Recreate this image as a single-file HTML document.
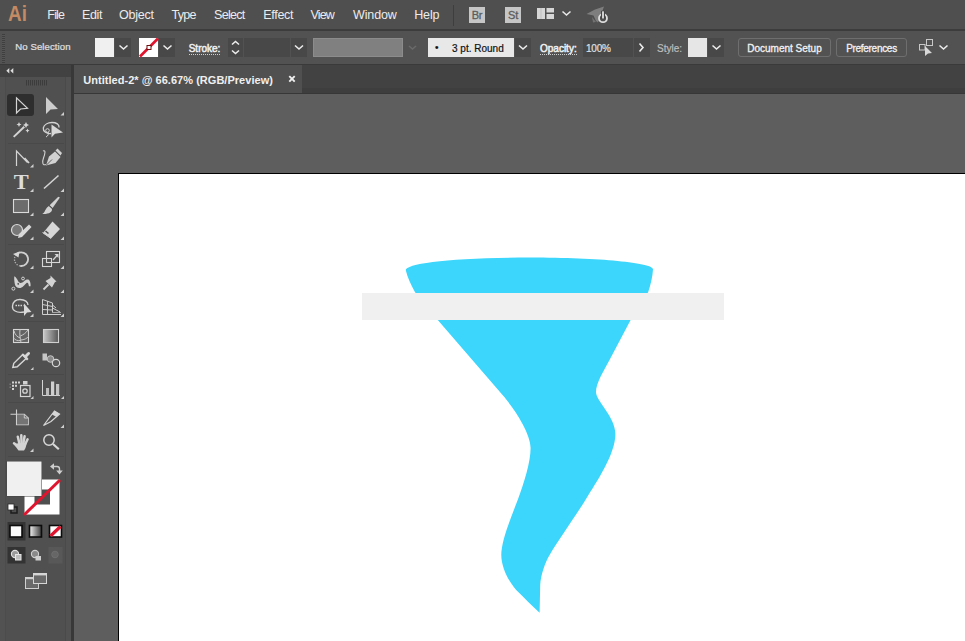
<!DOCTYPE html>
<html>
<head>
<meta charset="utf-8">
<title>Untitled-2* @ 66.67% (RGB/Preview)</title>
<style>
html,body{margin:0;padding:0;}
body{width:965px;height:641px;overflow:hidden;background:#5d5d5d;position:relative;font-family:"Liberation Sans","DejaVu Sans",sans-serif;color:#e6e6e6;}
.abs{position:absolute;}
#menubar{left:0;top:0;width:965px;height:29px;background:#4f4f4f;}
#menuline{left:0;top:29px;width:965px;height:2px;background:#3c3c3c;}
#ctrlbar{left:0;top:31px;width:965px;height:33px;background:#525252;}
.menu{position:absolute;top:7px;font-size:12.5px;color:#ececec;line-height:16px;white-space:nowrap;}
#ailogo{left:7.7px;top:0.6px;font-size:21.5px;line-height:26px;color:#c48a63;font-weight:bold;transform:scaleX(0.88);transform-origin:0 0;}
.lbl{-webkit-text-stroke:0.2px;margin-top:1px;position:absolute;font-size:10px;line-height:12px;color:#e0e0e0;white-space:nowrap;}
.ul{border-bottom:1px dotted #cfcfcf;}
#tabbar{left:72px;top:64px;width:893px;height:30px;background:#424242;}
#tab{left:74px;top:65px;width:228px;height:28px;background:#505050;}
#tabtxt{left:83.3px;top:74px;letter-spacing:0.03px;font-size:11px;line-height:13px;font-weight:bold;color:#efefef;white-space:nowrap;}
#toolbar{left:5px;top:77px;width:61px;height:564px;background:#505050;border-left:1px solid #4c4c4c;border-right:1px solid #4a4a4a;box-sizing:border-box;}
#toolhead{left:0;top:64px;width:72px;height:13px;background:#424242;}
#canvas{left:74px;top:94px;width:891px;height:547px;background:#5e5e5e;}
#artboard{left:118px;top:173px;width:860px;height:480px;background:#fff;border:1px solid #000;}
.btn{-webkit-text-stroke:0.3px #f4f4f4;position:absolute;top:38px;height:19px;border:1px solid #6e6e6e;border-radius:3px;font-size:10px;line-height:19.5px;color:#f0f0f0;text-align:center;box-sizing:border-box;white-space:nowrap;}

.appbox{width:16px;height:16px;background:#c6c6c6;color:#5c5c5c;font-size:11px;line-height:16px;text-align:center;font-weight:normal;letter-spacing:-0.2px;-webkit-text-stroke:0.3px;}
.sw{width:19px;height:19px;}
.dd{width:16px;height:19px;background:#484848;}
.fld{height:19px;background:#484848;}
.b{-webkit-text-stroke:0.5px #f0f0f0;color:#f0f0f0;}
#tbouter{left:0;top:64px;width:72px;height:577px;background:#525252;}
</style>
</head>
<body>
<div id="menubar" class="abs"></div>
<div id="menuline" class="abs"></div>
<div id="ctrlbar" class="abs"></div>
<div id="ailogo" class="abs">Ai</div>
<div class="menu" style="left:47.3px;letter-spacing:-0.8px">File</div>
<div class="menu" style="left:82px;letter-spacing:-0.35px">Edit</div>
<div class="menu" style="left:119px;letter-spacing:-0.23px">Object</div>
<div class="menu" style="left:171.6px;letter-spacing:-0.73px">Type</div>
<div class="menu" style="left:214px;letter-spacing:-0.69px">Select</div>
<div class="menu" style="left:263.3px;letter-spacing:-0.3px">Effect</div>
<div class="menu" style="left:310.5px;letter-spacing:-0.85px">View</div>
<div class="menu" style="left:353px;letter-spacing:-0.13px">Window</div>
<div class="menu" style="left:414.3px;letter-spacing:-0.2px">Help</div>

<!-- menubar right icons -->
<div class="abs" style="left:453px;top:5px;width:1px;height:21px;background:#3e3e3e"></div>
<div class="abs appbox" style="left:469px;top:7px;">Br</div>
<div class="abs appbox" style="left:505px;top:7px;">St</div>
<svg class="abs" style="left:536px;top:6px" width="80" height="20" viewBox="536 6 80 20">
  <rect x="537" y="8" width="8" height="11" fill="#d6d6d6"/>
  <rect x="540.700" y="8" width="0.600" height="11" fill="#b0b0b0"/>
  <rect x="546.5" y="8" width="7.5" height="4.5" fill="#d6d6d6"/>
  <rect x="546.5" y="14" width="7.5" height="5" fill="#d6d6d6"/>
  <path d="M562.5,11.5 L566.5,15 L570.5,11.5" fill="none" stroke="#e8e8e8" stroke-width="1.6"/>
  <path d="M586.500,14 L595,9.500 L604,6.500 L602,12 L598,22.500 L596,21 L593.500,15.500 Z" fill="#7e7e7e"/>
  <path d="M592,17 L596,22 L593,22.500 Z" fill="#727272"/>
  <circle cx="603" cy="18.200" r="4" fill="#4f4f4f" stroke="#e0e0e0" stroke-width="1.800"/>
  <rect x="601" y="10.800" width="4" height="8" fill="#454545"/>
  <rect x="602.100" y="11.300" width="1.800" height="7.200" fill="#e0e0e0"/>
</svg>

<!-- control bar -->
<div class="abs" style="left:2px;top:34px;width:3px;height:29px;background:repeating-linear-gradient(to bottom,#3f3f3f 0,#3f3f3f 1px,#565656 1px,#565656 2px)"></div>
<div class="lbl" style="left:15.3px;top:40px;font-size:9.6px;letter-spacing:0.07px">No Selection</div>
<div class="abs sw" style="left:95px;top:38px;background:#f0f0f0"></div>
<div class="abs dd" style="left:115px;top:38px"></div>
<div class="abs sw" style="left:139px;top:38px;background:#fff"></div>
<div class="abs dd" style="left:159px;top:38px"></div>
<div class="lbl b" style="left:188.7px;top:42px;"><span class="ul">Stroke:</span></div>
<div class="abs dd" style="left:228px;top:38px;width:15px"></div>
<div class="abs fld" style="left:244px;top:38px;width:46px"></div>
<div class="abs dd" style="left:291px;top:38px"></div>
<div class="abs" style="left:313px;top:38px;width:90px;height:19px;background:#808080;border:1px solid #8c8c8c;box-sizing:border-box"></div>
<div class="abs" style="left:428px;top:38px;width:86px;height:19px;background:#e8e8e8"></div>
<div class="lbl" style="left:435px;top:41px;color:#111">•</div>
<div class="lbl" style="left:452px;top:42px;color:#111">3 pt. Round</div>
<div class="abs dd" style="left:515px;top:38px"></div>
<div class="lbl b" style="left:540px;top:42px;"><span class="ul">Opacity:</span></div>
<div class="abs fld" style="left:583px;top:38px;width:50px"></div>
<div class="lbl" style="left:586px;top:42px;letter-spacing:-0.19px">100%</div>
<div class="abs dd" style="left:634px;top:38px"></div>
<div class="lbl" style="left:657px;top:42px;color:#bdbdbd">Style:</div>
<div class="abs sw" style="left:688px;top:38px;background:#e6e6e6"></div>
<div class="abs dd" style="left:708px;top:38px"></div>
<div class="btn" style="left:738px;width:93px">Document Setup</div>
<div class="btn" style="left:836px;width:71px;letter-spacing:-0.29px">Preferences</div>
<svg class="abs" style="left:0;top:32px" width="965" height="32" viewBox="0 32 965 32">
  <g fill="none" stroke="#ececec" stroke-width="1.6">
    <path d="M119.5,45.5 L123.5,49 L127.5,45.5"/>
    <path d="M163.500,45.5 L167.500,49 L171.500,45.5"/>
    <path d="M232,44.500 L235.500,41.500 L239,44.500"/>
    <path d="M232,50.500 L235.500,53.500 L239,50.500"/>
    <path d="M295,45.5 L299,49 L303,45.5"/>
    <path d="M519,45.5 L523,49 L527,45.5"/>
    <path d="M639.500,43.500 L643,47.500 L639.500,51.500"/>
    <path d="M712.500,45.5 L716.500,49 L720.500,45.5"/>
    <path d="M939.500,45.500 L943.500,49 L947.500,45.500"/>
  </g>
  <path d="M409,46 L412.500,49 L416,46" fill="none" stroke="#6a6a6a" stroke-width="1.5"/>
  <!-- stroke none swatch -->
  <path d="M140,56.500 L158,38.500" stroke="#e2142d" stroke-width="2.6"/>
  <rect x="147" y="45.500" width="4" height="4" fill="#fff" stroke="#6b1010" stroke-width="1"/>
  <!-- selection icon right -->
  <g fill="none" stroke="#c8c8c8" stroke-width="1">
    <rect x="919.500" y="44.500" width="5.500" height="5.500"/>
    <rect x="926.500" y="39.500" width="6" height="6"/>
  </g>
  <path d="M925,46 L925,56 L928,53.500 L932,53 Z" fill="#d8d8d8"/>
</svg>

<div id="tabbar" class="abs"></div>
<div class="abs" style="left:74px;top:88px;width:891px;height:6px;background:#3e3e3e"></div>
<div id="tab" class="abs"></div>
<div class="abs" style="left:74px;top:93px;width:891px;height:1px;background:#373737"></div>
<div id="tabtxt" class="abs">Untitled-2* @ 66.67% (RGB/Preview)</div>
<svg class="abs" style="left:286px;top:73px" width="12" height="12" viewBox="286 73 12 12"><path d="M289.300,76.200 L294.700,81.600 M294.700,76.200 L289.300,81.600" stroke="#f0f0f0" stroke-width="1.900"/></svg>
<div id="canvas" class="abs"></div>
<div id="artboard" class="abs"></div>
<div id="tbouter" class="abs"></div>
<div id="toolbar" class="abs"></div>
<div id="toolhead" class="abs"></div>
<div class="abs" style="left:71px;top:64px;width:3px;height:577px;background:#383838"></div>

<div class="abs" style="left:0;top:64px;width:965px;height:1px;background:#3a3a3a"></div>

<!--TOOLBAR-->
<svg class="abs" style="left:0;top:64px" width="74" height="577" viewBox="0 64 74 577">
<!-- header -->
<path d="M9.300,68 L6.300,70.700 L9.300,73.400 Z M13.300,68 L10.300,70.700 L13.300,73.400 Z" fill="#dcdcdc"/>
<g stroke="#3c3c3c" stroke-width="1">
<path d="M26.500,80 v5.500 M28.500,80 v5.500 M30.500,80 v5.500 M32.500,80 v5.500 M34.500,80 v5.500 M36.500,80 v5.500 M38.500,80 v5.500 M40.500,80 v5.500 M42.500,80 v5.500 M44.500,80 v5.500 M46.500,80 v5.500"/>
</g>
<!-- selected tool bg -->
<rect x="7" y="94" width="27" height="22" rx="3" fill="#2e2e2e"/>
<!-- small corner triangles -->
<g fill="#cfcfcf">
<path d="M64,112 v3.500 h-3.500 Z"/>
<path d="M33.500,164 v3.500 h-3.500 Z"/>
<path d="M33.500,188.500 v3.500 h-3.500 Z"/><path d="M64,188.500 v3.500 h-3.500 Z"/>
<path d="M33.500,212.500 v3.500 h-3.500 Z"/><path d="M64,212.500 v3.500 h-3.500 Z"/>
<path d="M33.500,236.500 v3.500 h-3.500 Z"/><path d="M64,236.500 v3.500 h-3.500 Z"/>
<path d="M33.500,265.500 v3.500 h-3.500 Z"/><path d="M64,265.500 v3.500 h-3.500 Z"/>
<path d="M33.500,289.500 v3.500 h-3.500 Z"/><path d="M64,289.500 v3.500 h-3.500 Z"/>
<path d="M33.500,313.500 v3.500 h-3.500 Z"/><path d="M64,313.500 v3.500 h-3.500 Z"/>
<path d="M33.500,367 v3 h-3 Z"/>
<path d="M33.500,396 v3 h-3 Z"/><path d="M64,396 v3 h-3 Z"/>
<path d="M64,424.500 v3.500 h-3.500 Z"/>
<path d="M33.500,448.500 v3.500 h-3.500 Z"/>
</g>
<!-- group separators -->
<g stroke="#494949" stroke-width="1">
<path d="M8,143.500 H64 M8,244.500 H64 M8,321.500 H64 M8,374.500 H64 M8,402.500 H64 M8,456.500 H64"/>
</g>

<!-- row1: selection (outline) & direct selection (filled) -->
<path d="M16.500,97.800 L16.500,113 L20.500,109 L27.500,108.300 Z" fill="none" stroke="#d4d4d4" stroke-width="1.200" stroke-linejoin="miter"/>
<path d="M46,97 L46,114 L50.500,109.500 L58,109 Z" fill="#cdcdcd"/>

<!-- row2: magic wand, lasso -->
<path d="M13.700,136.900 L24.300,126.700" stroke="#d4d4d4" stroke-width="2"/>
<path d="M19,122 l0.800,1.700 l1.700,0.800 l-1.700,0.800 l-0.800,1.700 l-0.800,-1.700 l-1.700,-0.800 l1.700,-0.800 Z M26,122 l1,2 l2,1 l-2,1 l-1,2 l-1,-2 l-2,-1 l2,-1 Z M27.500,128.500 l0.700,1.400 l1.400,0.700 l-1.400,0.700 l-0.700,1.400 l-0.700,-1.400 l-1.400,-0.700 l1.400,-0.700 Z" fill="#d4d4d4"/>
<path d="M51,133.500 C46,134 43,131 43.300,128 C44,124.500 48,122.500 52,122.500 C56.500,122.500 59.500,124.500 59,127.500" fill="none" stroke="#d4d4d4" stroke-width="1.3"/>
<circle cx="47.500" cy="130.500" r="1.800" fill="none" stroke="#d4d4d4" stroke-width="1"/>
<path d="M48,132 C49,134 48,136 46,137" fill="none" stroke="#d4d4d4" stroke-width="1"/>
<path d="M51.500,124.500 L51.500,137.500 L55,133.800 L63,132.500 Z" fill="#d8d8d8"/>

<!-- row3: anchor point, curvature pen -->
<path d="M16.500,166 L16.500,151 L27.500,162.500" fill="none" stroke="#d4d4d4" stroke-width="1.2"/>
<path d="M24.500,158 L29,163" stroke="#d4d4d4" stroke-width="1.8"/>
<path d="M43,151 C46,149.500 45,154 43.500,158 C42,162 42.500,166 46,164.500" fill="none" stroke="#d4d4d4" stroke-width="1.1"/>
<path d="M46,165.500 L49,156.500 L55,151.500 L60.500,157 L55.500,163 Z" fill="#d2d2d2"/>
<path d="M55.500,150.500 L57.500,148.500 L62,153 L60.500,155.500 Z" fill="#d2d2d2"/>
<path d="M46.500,165 L52,159.500" stroke="#515151" stroke-width="0.9"/>

<!-- row4: type, line -->
<text x="21.300" y="189" font-family="Liberation Serif, DejaVu Serif, serif" font-weight="bold" font-size="20" text-anchor="middle" fill="#dcdcdc" textLength="15" lengthAdjust="spacingAndGlyphs">T</text>
<path d="M44,188.500 L58.500,175.500" stroke="#d4d4d4" stroke-width="1.6"/>

<!-- row5: rectangle, paintbrush -->
<rect x="13.500" y="199.500" width="15" height="13" fill="#6c6c6c" stroke="#dadada" stroke-width="1.100"/>
<path d="M59.900,197.400 L58.300,196.700 L49.600,205.200 L52.600,208 Z" fill="#d2d2d2"/>
<path d="M48.900,206 L51.900,208.800 C52.600,212.300 49,214.300 42.300,214 C45.300,212.600 45,208.300 48.900,206 Z" fill="#d2d2d2"/>
<path d="M49.200,205.600 L52.300,208.500" stroke="#505050" stroke-width="0.700"/>

<!-- row6: shaper, eraser -->
<circle cx="17" cy="230" r="5.500" fill="#787878" stroke="#d8d8d8" stroke-width="1.200"/>
<path d="M18,238 L19,234 L29,224.500 L31.500,227 L22,237 Z" fill="#d8d8d8"/>
<path d="M52.500,221.500 L60,229 L51,238.500 L43,233 Z" fill="#d6d6d6"/>
<path d="M45.500,231 L48.500,233.500" stroke="#505050" stroke-width="1.500"/>
<path d="M42.500,232.500 L51,238.500" stroke="#d6d6d6" stroke-width="1"/>

<!-- row7: rotate, scale -->
<path d="M17.400,253.600 A6.800,6.800 0 1 1 20.100,265.900" fill="none" stroke="#cfcfcf" stroke-width="1.800"/>
<path d="M20.100,265.900 A6.800,6.800 0 0 1 15.700,255.300" fill="none" stroke="#b0b0b0" stroke-width="1.300" stroke-dasharray="1.300 1.300"/>
<path d="M13,254 L19.500,251.500 L18.500,257.500 Z" fill="#d6d6d6"/>
<rect x="46.500" y="251.500" width="13" height="11" fill="none" stroke="#d6d6d6" stroke-width="1.100"/>
<rect x="42.500" y="258.500" width="9" height="8" fill="none" stroke="#d6d6d6" stroke-width="1.100"/>
<path d="M53,260 L57.500,255" stroke="#d6d6d6" stroke-width="1.200"/>
<path d="M54.500,254 L58.500,254 L58.500,258 Z" fill="#d6d6d6"/>

<!-- row8: width, puppet pin -->
<path d="M14.300,276.300 C16,277 17,279 18.200,281.200 C19.800,284 22,283 24,281.300 C26,279.300 28.700,278.800 29.700,281 C30.700,283 30.700,285 30.500,286.300 L28.900,286.300 C28.700,284 28,282.300 26.800,282.800 C25,284 23.500,287.200 20.500,288 C18,288.500 15.300,287.200 14.800,284 C14.300,281 14,278.500 14.300,276.300 Z" fill="#d2d2d2"/>
<circle cx="13.400" cy="288.700" r="1.500" fill="#505050" stroke="#dcdcdc" stroke-width="0.900"/>
<circle cx="18.200" cy="283.900" r="1.400" fill="#505050" stroke="#dcdcdc" stroke-width="0.900"/>
<circle cx="23" cy="278.500" r="1.400" fill="#505050" stroke="#dcdcdc" stroke-width="0.900"/>
<path d="M50.500,275.500 L56.500,281.500 L55,282 L52,287.500 L45.500,281 L50.500,278 Z" fill="#d2d2d2"/>
<path d="M48.500,284.500 L43.500,289.500" stroke="#d2d2d2" stroke-width="1.800"/>

<!-- row9: shape builder, perspective grid -->
<path d="M24,312 C16,313.500 12,310 12.500,306 C13,302 16,299.500 20,299.500 C25,299.500 28,302 28,305" fill="none" stroke="#d4d4d4" stroke-width="1.300"/>
<path d="M15.500,305.500 h8" stroke="#d4d4d4" stroke-width="1.600" stroke-dasharray="1.500 1"/>
<path d="M24,303.500 L24,316 L27,312.500 L31.500,312 Z" fill="#dadada"/>
<path d="M42.500,299.500 L42.500,314.500 L61,314.500 M42.500,299.500 L52.500,303 L52.500,312.500 M47.500,301 L47.500,314 M42.500,304.500 L52.500,306.500 M42.500,309.500 L52.500,310 M52.500,308 L60,312 M52.500,305 L56,308" fill="none" stroke="#cfcfcf" stroke-width="1"/>
<path d="M52.500,312.500 L61,312.500" stroke="#bdbdbd" stroke-width="0.800"/>

<!-- row10: mesh, gradient -->
<rect x="13.500" y="329.500" width="15" height="13" fill="#646464" stroke="#d6d6d6" stroke-width="1.100"/>
<path d="M21,342.500 C20,338 19.500,334 20,329.500 M20.300,338 C17,337 15,334.500 14,331 M20.300,336 C23,335 26,333 28,330 M20.600,340 C24,340 27,338.500 29,336 M20.500,340.500 C17.500,341 15,340 13.500,338" fill="none" stroke="#c8c8c8" stroke-width="1"/>
<linearGradient id="gr1" x1="0" x2="1" y1="0" y2="0"><stop offset="0" stop-color="#c8c8c8"/><stop offset="1" stop-color="#555"/></linearGradient>
<rect x="43.500" y="329.500" width="15" height="13" fill="url(#gr1)" stroke="#d0d0d0" stroke-width="1.100"/>

<!-- row11: eyedropper, blend -->
<path d="M12.800,367.400 L13.800,363.300 L22.800,354.600 L26.400,358.200 L17.200,366.800 Z" fill="none" stroke="#d6d6d6" stroke-width="1.400"/>
<path d="M23,353.500 L25,355 L27.500,352.500 C29,351 31,353 29.500,354.500 L27,357 L28.500,359 L27,360.500 L21.500,355 Z" fill="#d6d6d6"/>
<rect x="42.500" y="353.500" width="4.500" height="7" fill="#c6c6c6"/>
<circle cx="50.500" cy="359" r="3.300" fill="#8a8a8a" stroke="#c8c8c8" stroke-width="1"/>
<circle cx="56" cy="363" r="3.700" fill="#5a5a5a" stroke="#d6d6d6" stroke-width="1.200"/>

<!-- row12: symbol sprayer, column graph -->
<g fill="#d2d2d2">
<rect x="12" y="381.500" width="2" height="2"/><rect x="15" y="381.500" width="2" height="2"/><rect x="18" y="381.500" width="2" height="2"/>
<rect x="12" y="384.800" width="2" height="2"/><rect x="15" y="384.800" width="2" height="2"/>
<rect x="12" y="388" width="2" height="2"/>
<rect x="9.500" y="383.500" width="1.500" height="1.500" opacity="0.35"/><rect x="9.500" y="386.500" width="1.500" height="1.500" opacity="0.35"/>
<rect x="23" y="381" width="4.500" height="3.500"/>
</g>
<rect x="20.500" y="385.500" width="9.500" height="11" fill="none" stroke="#d6d6d6" stroke-width="1.200"/>
<circle cx="25" cy="391" r="2.200" fill="none" stroke="#d6d6d6" stroke-width="1.300"/>
<path d="M42.500,380 L42.500,395.500 L60,395.500" fill="none" stroke="#d4d4d4" stroke-width="1"/>
<rect x="46" y="388" width="3" height="7.500" fill="#bcbcbc"/>
<rect x="51" y="381.500" width="3.200" height="14" fill="#d0d0d0"/>
<rect x="56" y="384" width="3.200" height="11.500" fill="#c4c4c4"/>

<!-- row13: artboard, slice -->
<path d="M16.500,409.500 L16.500,424.800 L28.300,424.800 L28.300,418 L24.300,414.200 L10.500,414.200" fill="none" stroke="#d0d0d0" stroke-width="1.100"/>
<path d="M17,414.700 L24,414.700 L27.800,418 L27.800,424.300 L17,424.300 Z" fill="#747474"/>
<path d="M24.300,414.200 L24.300,418 L28.300,418" fill="none" stroke="#d0d0d0" stroke-width="0.900"/>
<path d="M43.500,425.500 L54.500,411 L59.500,414 L51,421.500 Z" fill="none" stroke="#d6d6d6" stroke-width="1.200"/>
<path d="M54.500,411 L59.500,414 L56.500,417 L52,414.500 Z" fill="#d6d6d6"/>

<!-- row14: hand, zoom -->
<g stroke="#d4d4d4" stroke-width="2.500" stroke-linecap="round" fill="none">
<path d="M19.500,444 L17.800,436.700"/><path d="M21.500,443 L21.300,435.200"/><path d="M23.300,443.500 L24.600,436.300"/><path d="M24.800,445 L27.600,439.300"/><path d="M18.500,447 L14,443.300"/>
</g>
<path d="M16.500,443.500 L26.500,442.500 C26.500,446 25.500,448.500 24,450.500 L18.500,450.500 C17,448.500 15.500,446.500 14.500,445 Z" fill="#d4d4d4"/>
<circle cx="49" cy="440" r="5.200" fill="none" stroke="#d8d8d8" stroke-width="1.500"/>
<path d="M53,444 L58.800,449.300" stroke="#d8d8d8" stroke-width="2.200"/>

<!-- fill / stroke -->
<rect x="24.500" y="479.500" width="35" height="35" fill="#fff"/>
<rect x="34.500" y="489.500" width="15.500" height="15" fill="#4f4f4f"/>
<path d="M24,515 L60,480" stroke="#e0142e" stroke-width="3"/>
<rect x="6.500" y="461" width="35.500" height="35.500" fill="#444"/>
<rect x="7" y="461.500" width="34.500" height="34.500" fill="#f0f0f0"/>
<!-- swap -->
<path d="M52,466.500 L57,466.500 C59,466.500 59.500,467.500 59.500,469 L59.500,471" fill="none" stroke="#cdcdcd" stroke-width="1.400"/>
<path d="M50,466.500 L54,463.300 L54,469.700 Z M59.500,474.500 L56.200,470.500 L62.800,470.500 Z" fill="#cdcdcd"/>
<!-- default -->
<rect x="11" y="507" width="6" height="6" fill="none" stroke="#1c1c1c" stroke-width="1.500"/>
<rect x="8" y="504" width="6" height="6" fill="#fff" stroke="#2a2a2a" stroke-width="0.800"/>

<!-- color / gradient / none -->
<rect x="7.500" y="522" width="18" height="18.500" fill="#343434"/>
<rect x="10" y="525.500" width="12" height="11.500" fill="#fafafa" stroke="#0c0c0c" stroke-width="1.600"/>
<linearGradient id="gr2" x1="0" x2="1" y1="0" y2="0"><stop offset="0" stop-color="#f4f4f4"/><stop offset="1" stop-color="#3a3a3a"/></linearGradient>
<rect x="29.500" y="525.500" width="12" height="11.500" fill="url(#gr2)" stroke="#0c0c0c" stroke-width="1.600"/>
<rect x="49.500" y="525.500" width="12" height="11.500" fill="#fff" stroke="#0c0c0c" stroke-width="1.600"/>
<path d="M50.500,536 L60.500,526.500" stroke="#e0142e" stroke-width="3.200"/>

<!-- draw modes -->
<rect x="7.500" y="547" width="18" height="16.500" fill="#333"/>
<circle cx="15" cy="554" r="3.600" fill="#9a9a9a" stroke="#e0e0e0" stroke-width="1.100"/>
<rect x="15.500" y="554.500" width="5.500" height="5.500" fill="#bdbdbd" stroke="#e6e6e6" stroke-width="1"/>
<circle cx="35" cy="554" r="3.600" fill="#8a8a8a" stroke="#d0d0d0" stroke-width="1.100"/>
<rect x="35.500" y="556" width="5.500" height="4.500" fill="#d0d0d0"/>
<rect x="48.500" y="547" width="14" height="16.500" fill="#585858"/>
<circle cx="55" cy="554.500" r="3.300" fill="#666" stroke="#6f6f6f" stroke-width="1"/>

<!-- screen mode -->
<rect x="25.500" y="577.500" width="13" height="11" fill="#6a6a6a" stroke="#d0d0d0" stroke-width="1"/>
<rect x="25" y="577" width="14" height="2.200" fill="#d0d0d0"/>
<rect x="33.500" y="573.500" width="13" height="10" fill="#6a6a6a" stroke="#d6d6d6" stroke-width="1"/>
<rect x="33" y="573" width="14" height="2.400" fill="#d6d6d6"/>
</svg>
<!--/TOOLBAR-->
<svg class="abs" style="left:0;top:0" width="965" height="641" viewBox="0 0 965 641">
<path d="M405.8,270.3 C405,263.5 450,257.5 530,257.5 C600,257.5 654,263 653,269.3 C652.6,277 650.6,285 648.2,292 L630.6,320 L609.5,360 C603.9,370.6 596,383 596,392 C596,401 615.4,417 615.4,434 C615.4,454 597,481.3 585.4,500 C574.8,517 558.8,539.5 549.6,555 C545,562.7 540.7,575 540.2,585 L539.6,612.8 C532,605.5 523.5,597.3 516.2,590 C508.3,581 501.3,567 501.3,555 C501.3,540 511.4,516.8 517.7,500 C524,483.2 530.6,462 530.6,448 C530.6,432 512.2,406.1 503,395.5 L437.8,320 L414.9,292 C411,285 407.3,277 405.8,270.3 Z" fill="#3cd5fb"/>
<rect x="362" y="293" width="362" height="27" fill="#f0f0f0"/>
</svg>
</body>
</html>
